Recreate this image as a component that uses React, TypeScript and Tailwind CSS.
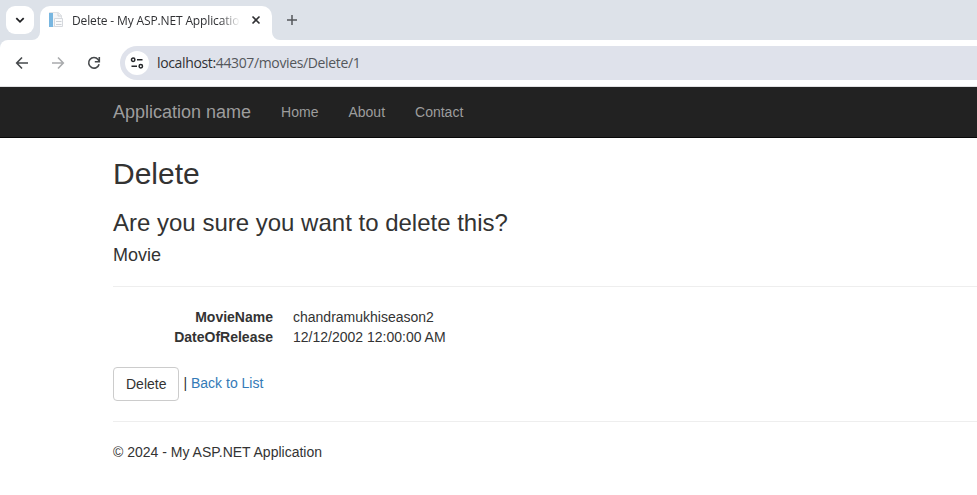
import React from "react";

function TabStrip() {
  return (
    <div className="flex h-10 shrink-0 bg-[#dde2e9] pl-1.5 font-['Open_Sans','Noto_Sans',sans-serif]">
      <button className="mt-1.5 flex h-7 w-7 items-center justify-center rounded-[9px] bg-white" aria-label="Search tabs">
        <svg width="28" height="28" viewBox="0 0 28 28" fill="none" stroke="#1f2023" strokeWidth="1.8">
          <path d="M10.3 12.2 L14 15.8 L17.7 12.2" />
        </svg>
      </button>
      <svg className="-ml-0.5 self-end" width="8" height="8" viewBox="0 0 8 8" fill="#fff">
        <path d="M8 0 V8 H0 A8 8 0 0 0 8 0Z" />
      </svg>
      <div className="mt-1.5 flex h-[34px] w-[232px] items-start rounded-t-[10px] bg-white pl-2">
        <svg className="mt-1.5 shrink-0" width="16" height="16" viewBox="0 0 16 16">
          <path d="M1.5 .5H10.5L13.5 3.5V14.5H1.5Z" fill="#f4f5f7" stroke="#dfe1e4" />
          <path d="M1 1H5V15H1Z" fill="#78b6e0" />
          <path d="M10 1V4H13.5" fill="none" stroke="#cfd3d7" />
          <path d="M6.5 6.5H14.5V14.5H6.5Z" fill="#fafbfc" stroke="#d5d8dd" />
          <path d="M8 9.5H13.5M8 12.5H13.5" stroke="#cdd1d6" />
        </svg>
        <span className="ml-2 mt-[6px] w-[168px] overflow-hidden whitespace-nowrap text-[12px] leading-[18px] tracking-[-0.14px] text-[#303134] [mask-image:linear-gradient(to_right,black_148px,transparent_168px)]">
          Delete - My ASP.NET Application
        </span>
        <svg className="ml-2 mt-1.5" width="16" height="16" viewBox="0 0 16 16" stroke="#303134" strokeWidth="1.6">
          <path d="M4.5 4.5L11.5 11.5M11.5 4.5L4.5 11.5" />
        </svg>
      </div>
      <svg className="self-end" width="8" height="8" viewBox="0 0 8 8" fill="#fff">
        <path d="M0 0 V8 H8 A8 8 0 0 1 0 0Z" />
      </svg>
      <svg className="ml-1 mt-3" width="16" height="16" viewBox="0 0 16 16" stroke="#54575b" strokeWidth="1.5">
        <path d="M8 3V13M3 8H13" />
      </svg>
    </div>
  );
}

function Toolbar() {
  return (
    <div className="bg-[#dde2e9]">
      <div className="flex h-[47px] items-start rounded-tl-[8px] border-b border-[#e1e1e3] bg-white pl-3.5 pt-1.5 font-['Open_Sans','Noto_Sans',sans-serif]">
        <svg className="mt-[9px]" width="16" height="16" viewBox="0 0 16 16" fill="none" stroke="#46494c" strokeWidth="1.6">
          <path d="M14 8H3M8 2.5L2.7 8L8 13.5" />
        </svg>
        <svg className="ml-5 mt-[9px]" width="16" height="16" viewBox="0 0 16 16" fill="none" stroke="#a9abad" strokeWidth="1.6">
          <path d="M2 8H13M8 2.5L13.3 8L8 13.5" />
        </svg>
        <svg className="ml-5 mt-[9px]" width="16" height="16" viewBox="0 0 16 16" fill="none" stroke="#46494c" strokeWidth="1.6">
          <path d="M13.1 9.2A5.3 5.3 0 1 1 12.1 4.5L13.2 6" />
          <path d="M13.3 2V6.7H8.8" />
        </svg>
        <div className="ml-[18px] flex h-[34px] flex-1 items-center rounded-l-full bg-[#dfe2eb] pl-[5px]">
          <div className="flex h-6 w-6 items-center justify-center rounded-full bg-white">
            <svg width="16" height="16" viewBox="0 0 16 16" fill="none" stroke="#25272a" strokeWidth="1.5">
              <circle cx="4.2" cy="4.8" r="1.7" />
              <path d="M8 4.8H13.5M2.5 11.2H8" />
              <circle cx="11.8" cy="11.2" r="1.7" />
            </svg>
          </div>
          <span className="ml-2 whitespace-nowrap text-[14px] leading-5 tracking-[-0.36px] text-[#54575b]">
            <span className="text-[#303134]">localhost:</span>44307/movies/Delete/1
          </span>
        </div>
      </div>
    </div>
  );
}

function SiteNav() {
  return (
    <nav className="flex h-[51px] shrink-0 border-b border-[#080808] bg-[#222] pl-[113px] text-[14px] leading-5 text-[#9d9d9d]">
      <a className="pt-[15px] text-[18px]">Application name</a>
      <a className="ml-[30px] pt-[15px]">Home</a>
      <a className="ml-[30px] pt-[15px]">About</a>
      <a className="ml-[30px] pt-[15px]">Contact</a>
    </nav>
  );
}

export default function App() {
  return (
    <div className="flex h-[495px] w-[977px] flex-col overflow-hidden bg-white font-['Liberation_Sans',Arial,sans-serif] text-[#333]">
      <TabStrip />
      <Toolbar />
      <SiteNav />
      <main className="pl-[113px] pt-[19px] text-[14px] leading-5">
        <h2 className="text-[30px] leading-[33px]">Delete</h2>
        <h3 className="mt-5 text-[24px] leading-[26.4px]">Are you sure you want to delete this?</h3>
        <h4 className="mt-2.5 text-[18px] leading-[19.8px]">Movie</h4>
        <hr className="my-5 border-[#eee]" />
        <dl className="grid grid-cols-[160px_1fr] gap-x-5">
          <dt className="text-right font-bold">MovieName</dt>
          <dd>chandramukhiseason2</dd>
          <dt className="text-right font-bold">DateOfRelease</dt>
          <dd>12/12/2002 12:00:00 AM</dd>
        </dl>
        <div className="mt-5 flex h-[34px]">
          <button className="h-[34px] rounded-[4px] border border-[#ccc] bg-white px-3">Delete</button>
          <span className="ml-1 mt-1.5 whitespace-pre">| <a className="text-[#337ab7]">Back to List</a></span>
        </div>
        <hr className="my-5 border-[#eee]" />
        <p>© 2024 - My ASP.NET Application</p>
      </main>
    </div>
  );
}
